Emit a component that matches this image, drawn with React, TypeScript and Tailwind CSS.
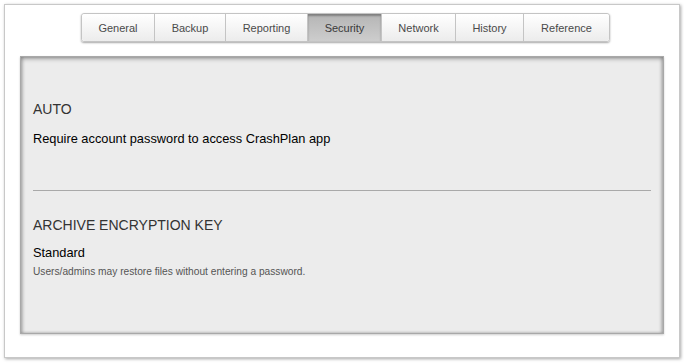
const tabs = [
  { label: "General", w: "w-[72px]" },
  { label: "Backup", w: "w-[71px]" },
  { label: "Reporting", w: "w-[82px]" },
  { label: "Security", w: "w-[74px]" },
  { label: "Network", w: "w-[74px]" },
  { label: "History", w: "w-[68px]" },
  { label: "Reference", w: "w-[86px]" },
]

export default function App() {
  const active = "Security"

  return (
    <div className="w-[684px] h-[363px] bg-white pt-[4px] pl-[4px] font-['Liberation_Sans',Arial,sans-serif]">
      <div className="w-[676px] h-[354px] bg-white border border-[#c8c8c8] shadow-[1px_1px_3px_rgba(0,0,0,0.35)] flex flex-col px-[15px] pt-[8px]">
        {/* Tabs */}
        <div className="flex justify-center pl-[7px]">
          <div className="flex h-[29px] rounded-[3px] shadow-[0_1px_2px_rgba(0,0,0,0.35)] border border-[#c4c4c4]">
            {tabs.map((t, i) => {
              const isActive = t.label === active
              return (
                <div
                  key={t.label}
                  className={`${t.w} flex items-center justify-center text-[11px] pt-[1px] ${
                    i > 0 ? "border-l border-[#c4c4c4]" : ""
                  } ${i === 0 ? "rounded-l-[3px]" : ""} ${i === tabs.length - 1 ? "rounded-r-[3px]" : ""} ${
                    isActive
                      ? "bg-gradient-to-b from-[#b5b5b5] to-[#cdcdcd] text-[#3a3a3a] shadow-[inset_0_2px_2px_rgba(0,0,0,0.3)] border-t-[#8a8a8a]"
                      : "bg-gradient-to-b from-[#ffffff] to-[#ececec] text-[#4a4a4a]"
                  }`}
                >
                  {t.label}
                </div>
              )
            })}
          </div>
        </div>

        {/* Panel */}
        <div className="mt-[14px] h-[278px] bg-[#ececec] border border-[#a8a8a8] shadow-[inset_0_2px_4px_rgba(0,0,0,0.3),inset_2px_0_3px_rgba(0,0,0,0.15),inset_-2px_0_3px_rgba(0,0,0,0.15),0_1px_2px_rgba(0,0,0,0.2)] px-[12px] pt-[42px]">
          <div className="text-[14px] leading-[20px] text-[#333]">AUTO</div>
          <div className="mt-[11px] text-[12.8px] leading-[18px] text-black">
            Require account password to access CrashPlan app
          </div>
          <div className="mt-[42px] border-t border-[#a9a9a9]" />
          <div className="mt-[24px] text-[14px] leading-[20px] text-[#333]">ARCHIVE ENCRYPTION KEY</div>
          <div className="mt-[9px] text-[12.8px] leading-[18px] text-black">Standard</div>
          <div className="mt-[3px] text-[10.2px] leading-[14px] text-[#555]">
            Users/admins may restore files without entering a password.
          </div>
        </div>
      </div>
    </div>
  )
}
